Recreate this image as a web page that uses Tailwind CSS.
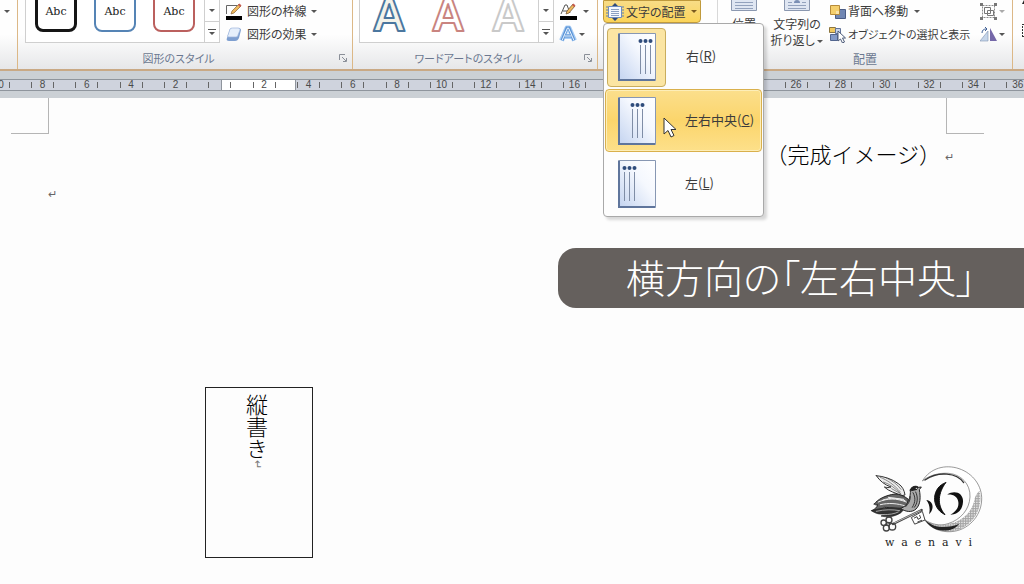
<!DOCTYPE html>
<html lang="ja">
<head>
    <meta charset="UTF-8">
    <meta name="viewport" content="width=device-width, initial-scale=1.0">
    <title>文字の配置</title>
    <script src="https://cdn.jsdelivr.net/npm/@tailwindcss/browser@4"></script>
</head>
<body class="min-h-screen bg-[#fdfdfd] font-['Noto_Sans_CJK_JP',sans-serif] text-xs text-[#3c3c3c] overflow-x-hidden">

    <!-- Ribbon -->
    <header class="relative z-10 flex h-[71px] border-b-2 border-[#c9a985] bg-linear-to-b from-[#fefefe] from-50% to-[#e6e7e9] [font-feature-settings:'palt']">

        <div class="w-[18px] shrink-0 border-r border-[#dcb887] pt-[10px] pl-1">
            <svg class="w-[6px] h-[3px]" viewBox="0 0 6 3"><path d="M0 0h6L3 3z" fill="#555"/></svg>
        </div>

        <!-- Shape styles -->
        <section class="w-[335px] shrink-0 border-r border-[#dcb887] flex flex-col">
            <div class="flex h-[43px] pl-[7px]">
                <div class="flex w-[195px] border-b border-x border-[#cfcfcf] bg-white">
                    <div class="flex-1 flex gap-[17px] pl-[9px] h-8 overflow-hidden items-end font-['DejaVu_Serif',serif] text-[11px] text-[#222]">
                        <button class="w-[42px] h-10 shrink-0 rounded-lg border-3 border-[#151515] bg-white leading-3 pb-px">Abc</button>
                        <button class="w-[42px] h-10 shrink-0 rounded-lg border-2 border-[#5584b5] bg-white leading-3 pb-px">Abc</button>
                        <button class="w-[42px] h-10 shrink-0 rounded-lg border-2 border-[#bb605e] bg-white leading-3 pb-px">Abc</button>
                    </div>
                    <div class="w-[15px] border-l border-[#cfcfcf] flex flex-col">
                        <button aria-label="下へ" class="h-[22px] flex items-center justify-center border-b border-[#cfcfcf]">
                            <svg class="w-[6px] h-[3px]" viewBox="0 0 6 3"><path d="M0 0h6L3 3z" fill="#555"/></svg>
                        </button>
                        <button aria-label="その他" class="flex-1 flex items-center justify-center">
                            <svg class="w-2 h-[6px]" viewBox="0 0 8 6"><path d="M0 0h8v1H0zM1 3h6L4 6z" fill="#555"/></svg>
                        </button>
                    </div>
                </div>
                <div class="pl-[5px]">
                    <button class="flex items-center gap-1 h-[22px]">
                        <svg class="w-[18px] h-[18px]" viewBox="0 0 18 18">
                            <path d="M1.500 12V3.500H12" fill="none" stroke="#666"/>
                            <path d="M6 12l1-3 7-7 2 2-7 7z" fill="#edb95e" stroke="#8a6134" stroke-width=".7"/>
                            <path d="M13 3l1.500-1.500 2 2L15 5z" fill="#c65a50"/>
                            <path d="M1 14h16v4H1z" fill="#000"/>
                        </svg>
                        <span>図形の枠線</span>
                        <svg class="w-[6px] h-[3px]" viewBox="0 0 6 3"><path d="M0 0h6L3 3z" fill="#555"/></svg>
                    </button>
                    <button class="flex items-center gap-1 h-6">
                        <svg class="w-[18px] h-[18px]" viewBox="0 0 18 18">
                            <path d="M2 13l3-9c1-1 2-1 3-1h6c1 0 2 1 2 2l-2 8c-1 2-2 3-4 3H4c-2 0-3-1-2-3z" fill="#7e9fd0"/>
                            <path d="M3 10l2-6c1-1 2-1 3-1h5c2 0 2 1 2 2l-2 5c0 1-1 2-2 2H4c-1 0-2-1-1-2z" fill="#e6effb" stroke="#9db6dc" stroke-width=".7"/>
                        </svg>
                        <span>図形の効果</span>
                        <svg class="w-[6px] h-[3px]" viewBox="0 0 6 3"><path d="M0 0h6L3 3z" fill="#555"/></svg>
                    </button>
                </div>
            </div>
            <div class="flex flex-1 items-center pt-2 pb-1 pr-[5px] text-[11px] text-[#6b7890]">
                <h2 class="flex-1 text-center">図形のスタイル</h2>
                <button aria-label="図形の書式設定">
                    <svg class="w-2 h-2" viewBox="0 0 8 8"><path d="M.5 6V.5H6M3 3l4 4M7.500 4v3.500H4" fill="none" stroke="#8a8f98"/></svg>
                </button>
            </div>
        </section>

        <!-- WordArt styles -->
        <section class="w-[245px] shrink-0 border-r border-[#dcb887] flex flex-col">
            <div class="flex h-[43px] pl-[6px]">
                <div class="flex w-[195px] border-b border-x border-[#cfcfcf] bg-white">
                    <div class="flex-1 flex items-start">
                        <svg class="w-[178px] h-10" viewBox="0 0 178 40" font-family="Liberation Sans, sans-serif" font-size="46" font-weight="bold" text-anchor="middle" stroke-linejoin="round">
                            <text x="29" y="31" fill="#f4f3ea" stroke="#4b779f" stroke-width="2">A</text>
                            <text x="88" y="31" fill="#ffffff" stroke="#c98480" stroke-width="2">A</text>
                            <text x="148" y="31" fill="#ffffff" stroke="#c9c9c9" stroke-width="2">A</text>
                        </svg>
                    </div>
                    <div class="w-[15px] shrink-0 border-l border-[#cfcfcf] flex flex-col">
                        <button aria-label="下へ" class="h-[22px] flex items-center justify-center border-b border-[#cfcfcf]">
                            <svg class="w-[6px] h-[3px]" viewBox="0 0 6 3"><path d="M0 0h6L3 3z" fill="#555"/></svg>
                        </button>
                        <button aria-label="その他" class="flex-1 flex items-center justify-center">
                            <svg class="w-2 h-[6px]" viewBox="0 0 8 6"><path d="M0 0h8v1H0zM1 3h6L4 6z" fill="#555"/></svg>
                        </button>
                    </div>
                </div>
                <div class="pl-[5px]">
                    <button aria-label="文字の輪郭" class="flex items-center gap-[6px] h-[22px]">
                        <svg class="w-[18px] h-[18px]" viewBox="0 0 18 18">
                            <path d="M2 12l4-9h2l3 8M4 9h5" fill="none" stroke="#555"/>
                            <path d="M7 12l1-3 6-7 2 2-6 7z" fill="#edb95e" stroke="#6b4a28" stroke-width=".7"/>
                            <path d="M13 3l1.500-1.500 2 2L15 5z" fill="#c65a50"/>
                            <path d="M1 14h17v4H1z" fill="#000"/>
                        </svg>
                        <svg class="w-[6px] h-[3px]" viewBox="0 0 6 3"><path d="M0 0h6L3 3z" fill="#555"/></svg>
                    </button>
                    <button aria-label="文字の効果" class="flex items-center gap-[2px] h-6">
                        <svg class="w-[18px] h-[18px]" viewBox="0 0 18 18">
                            <path d="M2.500 15.500L8 3h2l5.500 12.500M5 11.500h8" fill="none" stroke="#a9cdf5" stroke-width="5" stroke-linejoin="round"/>
                            <path d="M3 15.500L8 3h2l5 12.500M5.500 11h7" fill="none" stroke="#5b94d6" stroke-width="3"/>
                            <path d="M3 15.500L8.500 3h1l5.500 12.500M5.500 11h7" fill="none" stroke="#eaf4ff"/>
                        </svg>
                        <svg class="w-[6px] h-[3px]" viewBox="0 0 6 3"><path d="M0 0h6L3 3z" fill="#555"/></svg>
                    </button>
                </div>
            </div>
            <div class="flex flex-1 items-center pt-2 pb-1 pr-[5px] text-[11px] text-[#6b7890]">
                <h2 class="flex-1 text-center">ワードアートのスタイル</h2>
                <button aria-label="文字の書式設定">
                    <svg class="w-2 h-2" viewBox="0 0 8 8"><path d="M.5 6V.5H6M3 3l4 4M7.500 4v3.500H4" fill="none" stroke="#8a8f98"/></svg>
                </button>
            </div>
        </section>

        <!-- Text -->
        <section class="w-[120px] shrink-0 border-r border-[#d8d8d8] pl-[5px]">
            <div class="relative">
                <button class="flex items-center gap-[2px] w-[98px] h-[23px] pl-[2px] rounded-b-sm border border-[#c09a3c] bg-linear-to-b from-[#f8dc86] to-[#fbd458]">
                    <svg class="w-[18px] h-[18px]" viewBox="0 0 18 18">
                        <path d="M2.500 3.500h13v11h-13z" fill="#f4f8fe" stroke="#6f8cbd"/>
                        <path d="M5 6.500h8M5 8.500h8M5 10.500h8M5 12.500h8" stroke="#8ba0c2"/>
                        <path d="M9 0l3 3H6zM9 18l3-3H6z" fill="#2f4a78"/>
                        <path d="M1 3v12M17 3v12" stroke="#5c7eb0" stroke-dasharray="2 1"/>
                    </svg>
                    <span>文字の配置</span>
                    <svg class="w-[6px] h-[3px] ml-[3px]" viewBox="0 0 6 3"><path d="M0 0h6L3 3z" fill="#7a5a20"/></svg>
                </button>

                <!-- Drop-down menu -->
                <ul class="absolute top-[23px] left-0 w-[161px] p-[1px] rounded-sm border border-[#a9a9a9] bg-[#fdfdfd] shadow-[3px_3px_3px_rgba(0,0,0,0.15)] text-[13px]">
                    <li>
                        <button class="flex items-center w-full h-16 p-[2px]">
                            <span class="flex items-center justify-center w-[59px] h-[59px] rounded-sm border border-[#c9ad5e] bg-[#fbe5a3]">
                                <svg class="w-[38px] h-12" viewBox="0 0 38 48">
                                    <defs>
                                        <linearGradient id="sheet" x1="0" y1="1" x2="1" y2="0">
                                            <stop offset="0" stop-color="#c3d3f0"/><stop offset=".6" stop-color="#f5f8fe"/><stop offset="1" stop-color="#ffffff"/>
                                        </linearGradient>
                                    </defs>
                                    <path d="M.5.5h37v47H.5z" fill="url(#sheet)" stroke="#8797b3"/>
                                    <path d="M1 1v46h36" fill="none" stroke="#5f759c" stroke-width="2"/>
                                    <path d="M22.500 12v29M27.500 12v29M32.500 12v29" stroke="#7f8da6"/>
                                    <g fill="#2f4c7c"><circle cx="22.500" cy="8" r="2"/><circle cx="27.500" cy="8" r="2"/><circle cx="32.500" cy="8" r="2"/></g>
                                </svg>
                            </span>
                            <span class="pl-5 pb-[2px]">右(<u>R</u>)</span>
                        </button>
                    </li>
                    <li>
                        <button class="flex items-center w-full h-[63px] pl-3 rounded-sm border border-[#d9b04c] bg-linear-to-b from-[#fbdf8c] via-[#fbd56b] to-[#fde08a] shadow-[inset_0_0_0_1px_#fdeeb8]">
                            <svg class="w-[38px] h-12" viewBox="0 0 38 48">
                                <path d="M.5.5h37v47H.5z" fill="url(#sheet)" stroke="#8797b3"/>
                                <path d="M1 1v46h36" fill="none" stroke="#5f759c" stroke-width="2"/>
                                <path d="M14.500 12v29M19.500 12v29M24.500 12v29" stroke="#7f8da6"/>
                                <g fill="#2f4c7c"><circle cx="14.500" cy="8" r="2"/><circle cx="19.500" cy="8" r="2"/><circle cx="24.500" cy="8" r="2"/></g>
                            </svg>
                            <span class="pl-[29px] pb-[2px]">左右中央(<u>C</u>)</span>
                        </button>
                    </li>
                    <li>
                        <button class="flex items-center w-full h-[63px] pl-[13px]">
                            <svg class="w-[38px] h-12" viewBox="0 0 38 48">
                                <path d="M.5.5h37v47H.5z" fill="url(#sheet)" stroke="#8797b3"/>
                                <path d="M1 1v46h36" fill="none" stroke="#5f759c" stroke-width="2"/>
                                <path d="M6.500 12v29M11.500 12v29M16.500 12v29" stroke="#7f8da6"/>
                                <g fill="#2f4c7c"><circle cx="6.500" cy="8" r="2"/><circle cx="11.500" cy="8" r="2"/><circle cx="16.500" cy="8" r="2"/></g>
                            </svg>
                            <span class="pl-[29px] pb-[2px]">左(<u>L</u>)</span>
                        </button>
                    </li>
                </ul>
                <!-- Mouse pointer -->
                <svg class="absolute left-[60px] top-[117px] w-[14px] h-[21px]" viewBox="0 0 14 21">
                    <path d="M1 1v16l4-3.500 3 6.500 3-1.500-3-6h5z" fill="#fff" stroke="#333"/>
                </svg>
            </div>
        </section>

        <!-- Arrange -->
        <section class="flex-1 border-r border-[#dcb887] flex flex-col">
            <div class="flex h-[50px] pl-3">
                <button class="w-[28px] shrink-0 flex flex-col items-center">
                    <svg class="w-[26px] h-[11px]" viewBox="0 0 26 11">
                        <path d="M.5 0v10.500h25V0" fill="#dfe6f2" stroke="#8b98b0"/>
                        <path d="M4 2.500h18M4 5.500h18M4 8.500h18" stroke="#93a2bd"/>
                    </svg>
                    <span class="pt-[6px] leading-[14px]">位置</span>
                </button>
                <button class="w-[54px] ml-3 shrink-0 flex flex-col items-center">
                    <svg class="w-[26px] h-[11px]" viewBox="0 0 26 11">
                        <path d="M.5 0v10.500h25V0" fill="#dfe6f2" stroke="#8b98b0"/>
                        <path d="M4 2.500h4M18 2.500h4M4 5.500h18M4 8.500h18" stroke="#93a2bd"/>
                        <path d="M10 3c0-2 1-3 3-3s3 1 3 3z" fill="#7b8fb4"/>
                    </svg>
                    <span class="pt-[5px] leading-4 whitespace-nowrap">文字列の<br>折り返し
                        <svg class="inline w-[6px] h-[3px]" viewBox="0 0 6 3"><path d="M0 0h6L3 3z" fill="#555"/></svg>
                    </span>
                </button>
                <div class="ml-[5px] shrink-0">
                    <button class="flex items-center gap-[2px] h-[22px]">
                        <svg class="w-[17px] h-[17px]" viewBox="0 0 17 17">
                            <path d="M6.500 6.500h10v9h-10z" fill="#7187b3" stroke="#4b5d85"/>
                            <path d="M1.500 2.500h9v9h-9z" fill="#f5cf6c" stroke="#b78b3a"/>
                            <path d="M7 8h3v3h-3z" fill="#f9e3a8"/>
                        </svg>
                        <span>背面へ移動</span>
                        <svg class="w-[6px] h-[3px] ml-1" viewBox="0 0 6 3"><path d="M0 0h6L3 3z" fill="#555"/></svg>
                    </button>
                    <button class="flex items-center gap-[2px] h-6">
                        <svg class="w-[17px] h-[17px]" viewBox="0 0 17 17">
                            <path d="M.5 1.500h6v5h-6z" fill="#f2c95f" stroke="#8c7640"/>
                            <path d="M6.500 2.500h5v5h-5z" fill="#c8d3e8" stroke="#63749a"/>
                            <path d="M1.500 8.500h7v6h-7z" fill="#8399c6" stroke="#52658f"/>
                            <path d="M9 5v10l2.500-2 2 4 2-1-2-4h3z" fill="#fff" stroke="#4c5a78"/>
                        </svg>
                        <span class="text-[11px]">オブジェクトの選択と表示</span>
                    </button>
                </div>
                <div class="ml-auto pr-[7px] shrink-0">
                    <button aria-label="グループ化" class="flex items-center gap-[2px] h-[22px]">
                        <svg class="w-[17px] h-[17px]" viewBox="0 0 17 17" fill="none" stroke="#8d8d8d">
                            <path d="M2.500 2.500h12v12h-12z" stroke-dasharray="2 1"/>
                            <path d="M4.500 4.500h6v6h-6zM7.500 7.500h6v5h-6z" stroke="#777"/>
                            <path d="M0 0h3v3H0zM14 0h3v3h-3zM0 14h3v3H0zM14 14h3v3h-3z" fill="#777" stroke="none"/>
                        </svg>
                        <svg class="w-[6px] h-[3px]" viewBox="0 0 6 3"><path d="M0 0h6L3 3z" fill="#aaa"/></svg>
                    </button>
                    <button aria-label="回転" class="flex items-center gap-[2px] h-6">
                        <svg class="w-[17px] h-[17px]" viewBox="0 0 17 17">
                            <path d="M8 5v10H0z" fill="#c7d6ea" stroke="#7f93b4" stroke-width=".6"/>
                            <path d="M10 2v13h7z" fill="#7467a8"/>
                            <path d="M2 7c0-3 2-4 4-4M5 1l2 2-2 2" fill="none" stroke="#3f5f95"/>
                        </svg>
                        <svg class="w-[6px] h-[3px]" viewBox="0 0 6 3"><path d="M0 0h6L3 3z" fill="#555"/></svg>
                    </button>
                </div>
            </div>
            <h2 class="flex-1 text-center leading-5 text-[#6b7890]">配置</h2>
        </section>

        <div class="w-[11px] shrink-0 overflow-hidden pl-2">
            <svg class="w-4 h-[42px]" viewBox="0 0 16 42">
                <path d="M3 0v4H1z" fill="#222"/>
                <path d="M1.500 26v10M1 24.500h10M1 36.500h10" stroke="#333" stroke-dasharray="2 1"/>
            </svg>
        </div>
    </header>

    <!-- Ruler -->
    <div class="bg-[#cbd0d5] pt-2 pb-[7px] overflow-hidden">
        <div class="relative h-3 border-y border-[#8f959d] bg-[#cfd3dd]">
            <div class="absolute inset-y-0 left-[221px] w-[75px] border-x border-[#8f959d] bg-white"></div>
            <div id="ruler" class="relative flex h-full -ml-6 w-[calc(100%+40px)] font-['Liberation_Sans',sans-serif] text-[10px] leading-[10px] text-[#4a4a4a]"></div>
        </div>
    </div>

    <!-- Document -->
    <main class="font-light text-black">
        <div class="flex justify-between pl-[11px] pr-10">
            <div class="w-[38px] h-9 border-r border-b border-[#b5b5b5]"></div>
            <div class="w-[38px] h-9 border-l border-b border-[#b5b5b5]"></div>
        </div>
        <p class="flex justify-end items-center gap-1 pr-[70px] h-10 text-[22px]">（完成イメージ）<span class="font-['DejaVu_Sans',sans-serif] text-[11px] text-[#666] pt-2">↵</span></p>
        <p class="pl-12 pt-[14px] h-[74px] font-['DejaVu_Sans',sans-serif] text-[11px] text-[#666]">↵</p>

        <div class="ml-auto w-[466px] h-[60px] rounded-l-[18px] bg-[#65605d] pl-[68px] text-[39px] leading-[56px] text-white whitespace-nowrap [font-feature-settings:'palt']">横方向の「左右中央」</div>

        <div class="flex items-start justify-between pt-[79px] pl-[205px] pr-[38px]">
            <div class="w-[108px] h-[171px] border border-[#222] pt-[6px] pr-1 flex items-center [writing-mode:vertical-rl] text-[22px] leading-6">
                <p>縦書き<span class="font-['DejaVu_Sans',sans-serif] text-[11px] text-[#777] [text-orientation:sideways]">↵</span></p>
            </div>
            <div class="w-[117px] pt-[76px]">
                <!-- Bird carrying a key, in front of a crescent ring -->
                <svg class="w-full h-[72px]" viewBox="32 35 351 216" fill="none" stroke-linecap="round">
                    <defs>
                        <pattern id="hatch" width="5" height="5" patternUnits="userSpaceOnUse">
                            <path d="M0 5L5 0M0 0l2 2" stroke="#666" stroke-width="1.500"/>
                        </pattern>
                    </defs>
                    <path d="M193 88C215 50 262 38 302 52c42 14 70 52 68 94-2 50-42 92-92 95-32 2-62-10-79-36 20 14 46 20 70 12 38-12 64-42 66-80 2-40-28-68-64-71-30-2-58 6-78 22z" fill="#fff" stroke="#666" stroke-width="2"/>
                    <path d="M364 118c12 54-22 112-80 121-32 5-64-6-84-33 20 14 46 20 70 12 46-8 72-40 78-72 2-12 8-22 16-28z" fill="url(#hatch)"/>
                    <path d="M199 205c30 28 70 26 104 12-12 16-34 23-56 20-20-3-36-14-48-32z" fill="#222"/>
                    <path d="M200 86c40-28 96-22 116 8" stroke="#333" stroke-width="4"/>
                    <path d="M262 94c-40 12-48 74-2 96-26-30-20-66 2-96z" fill="#111" stroke="#111" stroke-width="3"/>
                    <path d="M266 130c24-16 50-4 48 22-2 26-18 38-38 38 18-10 26-22 24-38-2-16-16-24-34-22z" fill="#111"/>
                    <path d="M204 146c20 2 26 26 8 43 4-16 2-30-8-43z" fill="#111"/>
                    <!-- upper wing -->
                    <path d="M54 73c22 2 48 10 66 24 12 8 18 20 20 34l-10 2c-16-8-38-12-52-26 8 2 14 2 20 0-18-6-34-18-44-34z" fill="#eee" stroke="#333" stroke-width="3"/>
                    <path d="M66 78c20 8 42 22 60 44M76 92c18 6 34 18 50 34M84 80c18 8 34 20 44 34M100 112l28 16" stroke="#555" stroke-width="2"/>
                    <!-- lower wing -->
                    <path d="M48 158c10-14 32-26 62-30 14 0 28 6 40 16l-4 26c-26 6-50-2-68-2-6 4-22 16-38 10 10-4 16-10 18-18-4 2-8 0-10-2z" fill="#666" stroke="#222" stroke-width="3"/>
                    <path d="M60 152c28-12 54-12 84 0M66 160c26-6 50-4 76 4M74 146c24-8 44-6 66 2M90 138l46 6" stroke="#eee" stroke-width="3"/>
                    <!-- tail -->
                    <path d="M40 178c24-8 60-12 98-6l-10 12c-22 14-44 14-60 10 6-2 10-4 14-7-16 3-30 1-42-9z" fill="#333" stroke="#222" stroke-width="2"/>
                    <path d="M54 180c26-6 48-6 70-2M76 190c16 0 32-2 44-8" stroke="#ddd" stroke-width="2"/>
                    <!-- body and head -->
                    <path d="M156 116c4-12 18-14 24-8l9-1-6 8c4 22 4 44-10 58-12 12-34 8-46-2 12-4 20-12 24-24 4-10 6-20 5-31z" fill="#aaa" stroke="#222" stroke-width="3"/>
                    <path d="M164 124c8 14 8 28-2 44M172 122c8 16 6 34-4 46M156 136c0 12-6 22-14 30M160 110l14 4" stroke="#333" stroke-width="3"/>
                    <path d="M157 112c6-10 18-10 24-5l-6 9-16 4z" fill="#222"/>
                    <circle cx="174" cy="111" r="2" fill="#fff"/>
                    <!-- key -->
                    <path d="M190 176L104 218" stroke="#444" stroke-width="7"/>
                    <path d="M186 178l-80 38" stroke="#eee" stroke-width="2"/>
                    <path d="M160 198l32-18 8 26-30 12z" fill="#fff" stroke="#444" stroke-width="3"/>
                    <path d="M168 200l8-4 3 8 8-4-3-8M178 212l12-5" stroke="#444" stroke-width="3"/>
                    <g stroke="#444" stroke-width="4"><circle cx="92" cy="206" r="9"/><circle cx="76" cy="214" r="8"/><circle cx="84" cy="230" r="9"/><circle cx="102" cy="226" r="10"/><circle cx="89" cy="218" r="5"/></g>
                </svg>
                <p class="flex justify-between pt-[2px] pl-4 pr-[14px] font-['DejaVu_Serif',serif] text-[11px] leading-3 text-[#222]"><span>w</span><span>a</span><span>e</span><span>n</span><span>a</span><span>v</span><span>i</span></p>
            </div>
        </div>
    </main>

    <script>
        // numbers count outwards from the left margin of the text
        const marks = [10, 8, 6, 4, 2, '', 2, 4, 6, 8, 10, 12, 14, 16, 18, 20, 22, 24, 26, 28, 30, 32, 34, 36];
        document.getElementById('ruler').innerHTML = marks.map(n => `
            <div class="flex-1 flex items-center justify-center">
                <i class="w-px h-[6px] bg-[#666]"></i>
                <span class="w-[21px] text-center">${n}</span>
                <i class="w-px h-[6px] bg-[#666]"></i>
            </div>`).join('');
    </script>
</body>
</html>
